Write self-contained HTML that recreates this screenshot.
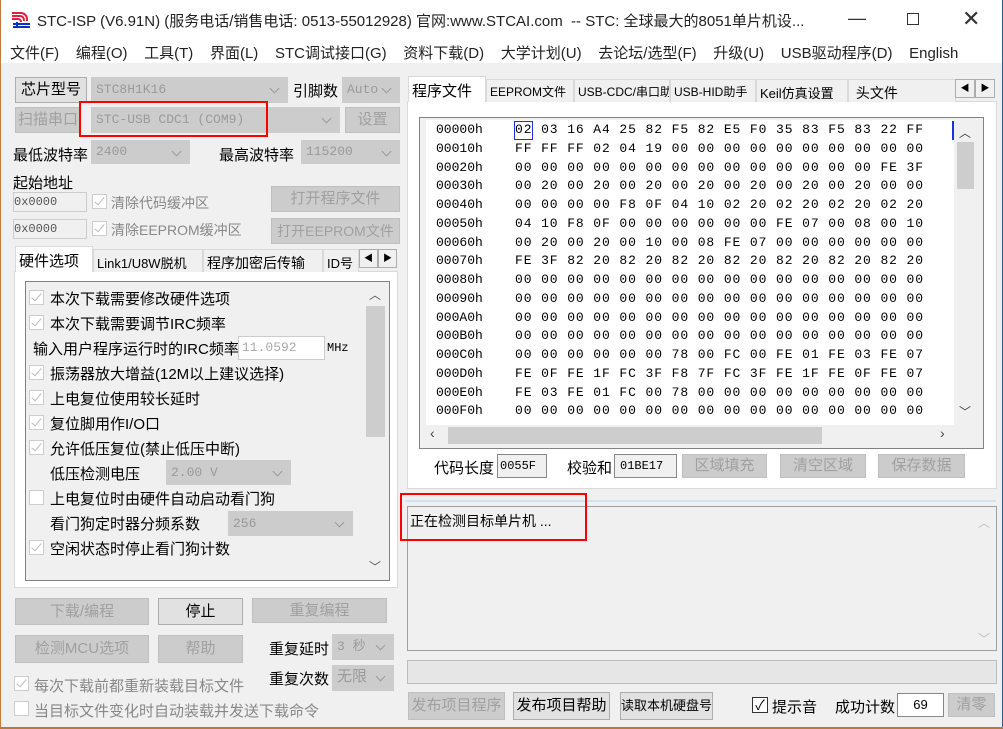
<!DOCTYPE html>
<html style="overflow:hidden"><head><meta charset="utf-8"><style>
*{box-sizing:border-box;margin:0;padding:0}
html,body{width:1003px;height:729px;overflow:hidden}
body{background:#f0f0f0;font-family:"Liberation Sans","Noto Sans CJK SC",sans-serif;font-size:14px;color:#000;position:relative}
.a{position:absolute;white-space:nowrap}
.btn{position:absolute;border:1px solid #adadad;background:#e1e1e1;text-align:center;font-size:14px;white-space:nowrap;overflow:hidden}
.dis{color:#a0a0a0;background:#cccccc;border-color:#bfbfbf}
.cb{position:absolute;background:#ccc;border:1px solid #ccc;color:#9a9a9a;font-size:13px;padding-left:4px;font-family:"Liberation Mono","Noto Sans CJK SC",monospace;white-space:nowrap}
.cb:after{content:"";position:absolute;right:9px;top:7px;width:6px;height:6px;border-right:1px solid #999;border-bottom:1px solid #999;transform:rotate(45deg)}
.chk{position:absolute;width:15px;height:15px;border:1px solid #ccc;background:#fff}
.chk.on:after{content:"";position:absolute;left:4px;top:0px;width:4px;height:9px;border-right:1.5px solid #bbb;border-bottom:1.5px solid #bbb;transform:rotate(40deg)}
.mono{font-family:"Liberation Mono","Noto Sans CJK SC",monospace}
.tab{position:absolute;height:23px;border:1px solid #d9d9d9;border-bottom:none;background:#f0f0f0;font-size:13px;padding:3px 3px 0;white-space:nowrap;overflow:hidden}
.red{position:absolute;border:2px solid #f00}
.hex{position:absolute;font-family:"Liberation Mono",monospace;font-size:13px;color:#000}
</style></head><body>
<div class="a" style="left:0;top:0;width:1003px;height:63px;background:#fff"></div>
<div class="a" style="left:0;top:0;width:1px;height:729px;background:#c87a3c"></div>
<div class="a" style="left:1002px;top:0;width:1px;height:729px;background:#2b5f8a"></div>
<div class="a" style="left:0;top:727px;width:1003px;height:2px;background:#b8793a"></div>
<svg class="a" style="left:11px;top:10px" width="20" height="18" viewBox="0 0 20 18"><path d="M1 3h9a6 6 0 0 1 6 6v2M1 6h8a4 4 0 0 1 4 4v1M1 9h6a3 3 0 0 1 3 3" stroke="#e02040" stroke-width="2" fill="none"/><path d="M2 14h17M2 17h17M6 12v5" stroke="#1030c0" stroke-width="2" fill="none"/></svg>
<div class="a" style="left:37px;top:10px;font-size:15px;color:#222">STC-ISP (V6.91N) (服务电话/销售电话: 0513-55012928) 官网:www.STCAI.com &nbsp;-- STC: 全球最大的8051单片机设...</div>
<div class="a" style="left:848px;top:8px;font-size:18px;color:#333">—</div>
<div class="a" style="left:907px;top:13px;width:12px;height:12px;border:1px solid #333"></div>
<div class="a" style="left:962px;top:6px;font-size:22px;color:#333;font-weight:100">✕</div>
<div class="a" style="left:10px;top:42px;font-size:15px;color:#222">文件(F)&nbsp;&nbsp;&nbsp; 编程(O)&nbsp;&nbsp;&nbsp; 工具(T)&nbsp;&nbsp;&nbsp; 界面(L)&nbsp;&nbsp;&nbsp; STC调试接口(G)&nbsp;&nbsp;&nbsp; 资料下载(D)&nbsp;&nbsp;&nbsp; 大学计划(U)&nbsp;&nbsp;&nbsp; 去论坛/选型(F)&nbsp;&nbsp;&nbsp; 升级(U)&nbsp;&nbsp;&nbsp; USB驱动程序(D)&nbsp;&nbsp;&nbsp; English</div>

<div class="btn" style="left:15px;top:77px;width:72px;height:26px;line-height:24px;font-size:15px">芯片型号</div>
<div class="cb" style="left:91px;top:77px;width:197px;height:26px;line-height:24px">STC8H1K16</div>
<div class="a" style="left:293px;top:80px;font-size:15px">引脚数</div>
<div class="cb" style="left:342px;top:77px;width:58px;height:26px;line-height:24px">Auto</div>
<div class="btn dis" style="left:15px;top:107px;width:66px;height:26px;line-height:24px;font-size:15px">扫描串口</div>
<div class="cb" style="left:91px;top:107px;width:249px;height:26px;line-height:24px">STC-USB CDC1 (COM9)</div>
<div class="btn dis" style="left:345px;top:107px;width:55px;height:26px;line-height:24px;font-size:15px">设置</div>
<div class="red" style="left:79px;top:101px;width:189px;height:36px"></div>
<div class="a" style="left:13px;top:144px;font-size:15px">最低波特率</div>
<div class="cb" style="left:91px;top:140px;width:99px;height:24px;line-height:22px">2400</div>
<div class="a" style="left:219px;top:144px;font-size:15px">最高波特率</div>
<div class="cb" style="left:301px;top:140px;width:99px;height:24px;line-height:22px">115200</div>
<div class="a" style="left:13px;top:172px;font-size:15px">起始地址</div>
<div class="a mono" style="left:13px;top:192px;width:74px;height:20px;border:1px solid #ccc;background:#f0f0f0;font-size:12px;line-height:18px;color:#555">0x0000</div>
<div class="chk on" style="left:92px;top:194px"></div>
<div class="a" style="left:111px;top:193px;color:#888;font-size:14px">清除代码缓冲区</div>
<div class="btn dis" style="left:271px;top:186px;width:129px;height:26px;line-height:24px;font-size:15px">打开程序文件</div>
<div class="a mono" style="left:13px;top:219px;width:74px;height:20px;border:1px solid #ccc;background:#f0f0f0;font-size:12px;line-height:18px;color:#555">0x0000</div>
<div class="chk on" style="left:92px;top:221px"></div>
<div class="a" style="left:111px;top:220px;color:#888;font-size:14px">清除EEPROM缓冲区</div>
<div class="btn dis" style="left:271px;top:218px;width:129px;height:26px;line-height:24px">打开EEPROM文件</div>

<div class="a" style="left:14px;top:271px;width:384px;height:317px;background:#fff;border:1px solid #d9d9d9"></div>
<div class="tab" style="left:15px;top:246px;width:78px;height:26px;background:#fff;font-size:15px">硬件选项</div>
<div class="tab" style="left:93px;top:249px;width:110px">Link1/U8W脱机</div>
<div class="tab" style="left:203px;top:249px;width:120px;font-size:14px">程序加密后传输</div>
<div class="tab" style="left:323px;top:249px;width:36px">ID号</div>
<div class="btn" style="left:359px;top:249px;width:19px;height:19px;font-size:9px;line-height:17px;background:#f0f0f0">◀</div>
<div class="btn" style="left:378px;top:249px;width:19px;height:19px;font-size:9px;line-height:17px;background:#f0f0f0">▶</div>
<div class="a" style="left:25px;top:281px;width:365px;height:300px;border:1px solid #828282;background:#f0f0f0"></div>
<div class="a" style="left:364px;top:282px;width:25px;height:298px;background:#f0f0f0"></div>
<div class="a" style="left:366px;top:306px;width:19px;height:131px;background:#cdcdcd"></div>
<div class="a" style="left:369px;top:286px;font-size:12px;color:#555">︿</div>
<div class="a" style="left:369px;top:558px;font-size:12px;color:#555">﹀</div>
<div class="chk on" style="left:29px;top:290px"></div><div class="a" style="left:50px;top:288px;font-size:15px">本次下载需要修改硬件选项</div>
<div class="chk on" style="left:29px;top:315px"></div><div class="a" style="left:50px;top:313px;font-size:15px">本次下载需要调节IRC频率</div>
<div class="a" style="left:33px;top:338px;font-size:15px">输入用户程序运行时的IRC频率</div>
<div class="a mono" style="left:238px;top:336px;width:87px;height:24px;border:1px solid #ccc;background:#fff;color:#aaa;font-size:13px;padding:3px 3px">11.0592</div>
<div class="a mono" style="left:327px;top:341px;font-size:12px">MHz</div>
<div class="chk on" style="left:29px;top:365px"></div><div class="a" style="left:50px;top:363px;font-size:15px">振荡器放大增益(12M以上建议选择)</div>
<div class="chk on" style="left:29px;top:390px"></div><div class="a" style="left:50px;top:388px;font-size:15px">上电复位使用较长延时</div>
<div class="chk on" style="left:29px;top:415px"></div><div class="a" style="left:50px;top:413px;font-size:15px">复位脚用作I/O口</div>
<div class="chk on" style="left:29px;top:440px"></div><div class="a" style="left:50px;top:438px;font-size:15px">允许低压复位(禁止低压中断)</div>
<div class="a" style="left:50px;top:463px;font-size:15px">低压检测电压</div>
<div class="cb" style="left:166px;top:460px;width:125px;height:25px;line-height:23px">2.00 V</div>
<div class="chk" style="left:29px;top:490px"></div><div class="a" style="left:50px;top:488px;font-size:15px">上电复位时由硬件自动启动看门狗</div>
<div class="a" style="left:50px;top:513px;font-size:15px">看门狗定时器分频系数</div>
<div class="cb" style="left:228px;top:511px;width:125px;height:25px;line-height:23px">256</div>
<div class="chk on" style="left:29px;top:540px"></div><div class="a" style="left:50px;top:538px;font-size:15px">空闲状态时停止看门狗计数</div>

<div class="btn dis" style="left:15px;top:598px;width:134px;height:27px;line-height:25px;font-size:15px">下载/编程</div>
<div class="btn" style="left:158px;top:598px;width:85px;height:27px;line-height:25px;font-size:15px">停止</div>
<div class="btn dis" style="left:252px;top:598px;width:135px;height:25px;line-height:23px;font-size:15px">重复编程</div>
<div class="btn dis" style="left:15px;top:635px;width:134px;height:28px;line-height:26px;font-size:15px">检测MCU选项</div>
<div class="btn dis" style="left:158px;top:635px;width:85px;height:28px;line-height:26px;font-size:15px">帮助</div>
<div class="a" style="left:269px;top:638px;font-size:15px">重复延时</div>
<div class="cb" style="left:332px;top:634px;width:62px;height:26px;line-height:24px">3 秒</div>
<div class="a" style="left:269px;top:668px;font-size:15px">重复次数</div>
<div class="cb" style="left:332px;top:665px;width:62px;height:26px;line-height:24px;font-size:15px">无限</div>
<div class="chk on" style="left:14px;top:676px"></div><div class="a" style="left:34px;top:675px;font-size:15px;color:#888">每次下载前都重新装载目标文件</div>
<div class="chk" style="left:14px;top:701px"></div><div class="a" style="left:34px;top:700px;font-size:15px;color:#888">当目标文件变化时自动装载并发送下载命令</div>

<!-- right -->
<div class="a" style="left:407px;top:101px;width:590px;height:388px;background:#fff;border:1px solid #d9d9d9"></div>
<div class="tab" style="left:408px;top:76px;width:78px;height:26px;background:#fff;font-size:15px">程序文件</div>
<div class="tab" style="left:486px;top:79px;width:88px;font-size:12px">EEPROM文件</div>
<div class="tab" style="left:574px;top:79px;width:96px;font-size:12px">USB-CDC/串口助手</div>
<div class="tab" style="left:670px;top:79px;width:86px;font-size:12px">USB-HID助手</div>
<div class="tab" style="left:756px;top:79px;width:92px;font-size:13px">Keil仿真设置</div>
<div class="tab" style="left:848px;top:79px;width:108px;font-size:14px">&nbsp;头文件</div>
<div class="btn" style="left:955px;top:79px;width:20px;height:19px;font-size:9px;line-height:17px;background:#f0f0f0">◀</div>
<div class="btn" style="left:975px;top:79px;width:20px;height:19px;font-size:9px;line-height:17px;background:#f0f0f0">▶</div>
<div class="a" style="left:419px;top:117px;width:565px;height:332px;border:1px solid #828282;background:#f0f0f0"></div>
<div class="a" style="left:426px;top:120px;width:528px;height:305px;background:#fff"></div>
<div class="a" style="left:954px;top:120px;width:22px;height:305px;background:#f0f0f0"></div>
<div class="a" style="left:957px;top:142px;width:17px;height:47px;background:#cdcdcd"></div>
<div class="a" style="left:959px;top:124px;font-size:12px;color:#444">︿</div>
<div class="a" style="left:959px;top:403px;font-size:12px;color:#444">﹀</div>
<div class="a" style="left:448px;top:427px;width:374px;height:17px;background:#cdcdcd"></div>
<div class="a" style="left:430px;top:425px;font-size:14px;color:#444">‹</div>
<div class="a" style="left:940px;top:425px;font-size:14px;color:#444">›</div>
<div class="a" style="left:514px;top:121px;width:19px;height:19px;border:1px solid #2030e0"></div>
<div class="a" style="left:952px;top:121px;width:2px;height:19px;background:#2030e0"></div>
<div class="hex" style="left:436px;top:121px;line-height:18.75px;white-space:pre">00000h
00010h
00020h
00030h
00040h
00050h
00060h
00070h
00080h
00090h
000A0h
000B0h
000C0h
000D0h
000E0h
000F0h</div>
<div class="hex" style="left:515px;top:121px;line-height:18.75px;white-space:pre;letter-spacing:0.9px">02 03 16 A4 25 82 F5 82 E5 F0 35 83 F5 83 22 FF
FF FF FF 02 04 19 00 00 00 00 00 00 00 00 00 00
00 00 00 00 00 00 00 00 00 00 00 00 00 00 FE 3F
00 20 00 20 00 20 00 20 00 20 00 20 00 20 00 00
00 00 00 00 F8 0F 04 10 02 20 02 20 02 20 02 20
04 10 F8 0F 00 00 00 00 00 00 FE 07 00 08 00 10
00 20 00 20 00 10 00 08 FE 07 00 00 00 00 00 00
FE 3F 82 20 82 20 82 20 82 20 82 20 82 20 82 20
00 00 00 00 00 00 00 00 00 00 00 00 00 00 00 00
00 00 00 00 00 00 00 00 00 00 00 00 00 00 00 00
00 00 00 00 00 00 00 00 00 00 00 00 00 00 00 00
00 00 00 00 00 00 00 00 00 00 00 00 00 00 00 00
00 00 00 00 00 00 78 00 FC 00 FE 01 FE 03 FE 07
FE 0F FE 1F FC 3F F8 7F FC 3F FE 1F FE 0F FE 07
FE 03 FE 01 FC 00 78 00 00 00 00 00 00 00 00 00
00 00 00 00 00 00 00 00 00 00 00 00 00 00 00 00</div>
<div class="a" style="left:434px;top:457px;font-size:15px">代码长度</div>
<div class="a mono" style="left:497px;top:454px;width:50px;height:24px;border:1px solid #888;background:#f0f0f0;font-size:12px;padding:4px 2px">0055F</div>
<div class="a" style="left:567px;top:457px;font-size:15px">校验和</div>
<div class="a mono" style="left:614px;top:454px;width:63px;height:24px;border:1px solid #888;background:#f0f0f0;font-size:12px;padding:4px 5px">01BE17</div>
<div class="btn dis" style="left:682px;top:454px;width:85px;height:24px;line-height:22px;font-size:15px">区域填充</div>
<div class="btn dis" style="left:780px;top:454px;width:86px;height:24px;line-height:22px;font-size:15px">清空区域</div>
<div class="btn dis" style="left:878px;top:454px;width:87px;height:24px;line-height:22px;font-size:15px">保存数据</div>

<div class="a" style="left:406px;top:500px;width:590px;height:2px;background:#cfe3f3"></div>
<div class="a" style="left:407px;top:506px;width:590px;height:145px;border:1px solid #a0a0a0;background:#f0f0f0"></div>
<div class="a" style="left:410px;top:511px;font-size:14px">正在检测目标单片机 ...</div>
<div class="a" style="left:978px;top:514px;font-size:12px;color:#bbb">︿</div>
<div class="a" style="left:978px;top:630px;font-size:12px;color:#bbb">﹀</div>
<div class="red" style="left:400px;top:493px;width:187px;height:48px"></div>
<div class="a" style="left:407px;top:660px;width:590px;height:24px;border:1px solid #bcbcbc;background:#e6e6e6"></div>
<div class="btn dis" style="left:408px;top:692px;width:97px;height:28px;line-height:26px;font-size:15px">发布项目程序</div>
<div class="btn" style="left:513px;top:692px;width:97px;height:28px;line-height:26px;font-size:15px">发布项目帮助</div>
<div class="btn" style="left:620px;top:692px;width:93px;height:28px;line-height:26px;font-size:13px">读取本机硬盘号</div>
<div class="a" style="left:752px;top:697px;width:16px;height:16px;border:1px solid #333;background:#fff;font-size:14px;line-height:14px;text-align:center">✓</div>
<div class="a" style="left:772px;top:696px;font-size:15px">提示音</div>
<div class="a" style="left:835px;top:696px;font-size:15px">成功计数</div>
<div class="a" style="left:897px;top:693px;width:47px;height:24px;border:1px solid #888;background:#fff;font-size:13px;text-align:center;line-height:22px">69</div>
<div class="btn dis" style="left:948px;top:693px;width:47px;height:24px;line-height:22px;font-size:15px">清零</div>
</body></html>
